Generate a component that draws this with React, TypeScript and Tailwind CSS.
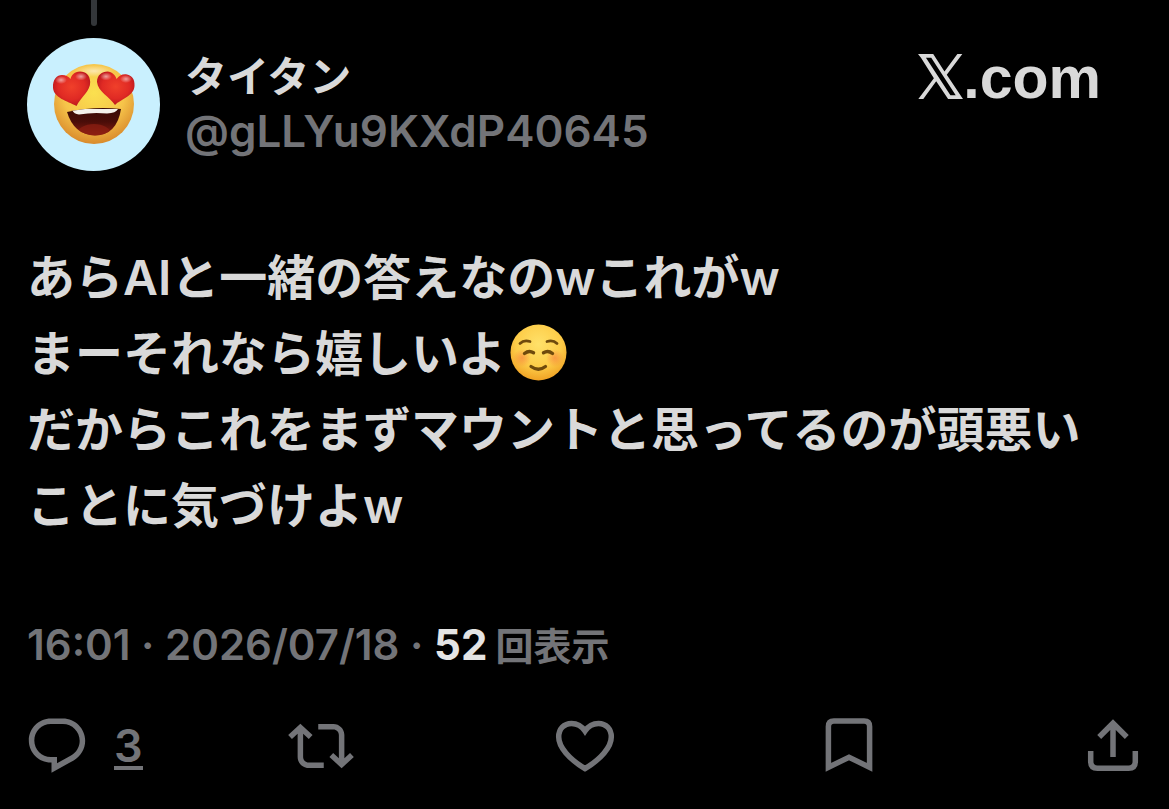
import type { ReactNode } from 'react';

const fontStack =
  "font-['Inter','Noto_Sans_CJK_JP',sans-serif] font-semibold";

const lines = [
  'だからこれをまずマウントと思ってるのが頭悪い',
  'ことに気づけよw',
];

function HeartEyes() {
  return (
    <svg viewBox="0 0 133 133" className="size-full" role="img" aria-label="avatar">
      <defs>
        <radialGradient id="face" cx="0.5" cy="0.36" r="0.64">
          <stop offset="0" stopColor="#fbe04f" />
          <stop offset="0.6" stopColor="#f6c44a" />
          <stop offset="1" stopColor="#d98a2c" />
        </radialGradient>
        <radialGradient id="heart" cx="0.5" cy="0.45" r="0.6">
          <stop offset="0" stopColor="#f0402a" />
          <stop offset="0.6" stopColor="#e02a24" />
          <stop offset="1" stopColor="#b3141c" />
        </radialGradient>
        <radialGradient id="shine">
          <stop offset="0" stopColor="#fff" stopOpacity="0.55" />
          <stop offset="1" stopColor="#fff" stopOpacity="0" />
        </radialGradient>
        <linearGradient id="mouth" x1="0" y1="0" x2="0" y2="1">
          <stop offset="0" stopColor="#3a0a06" />
          <stop offset="0.5" stopColor="#4a0d08" />
          <stop offset="1" stopColor="#8a1c10" />
        </linearGradient>
        <clipPath id="mouthClip">
          <path d="M40 74Q67 68 94 71Q90 97 68 97.500Q47 97 40 74Z" />
        </clipPath>
      </defs>
      <circle cx="66.500" cy="66.500" r="66.500" fill="#c9f0fe" />
      <circle cx="67" cy="66" r="40" fill="url(#face)" />
      <ellipse cx="67" cy="33" rx="20" ry="6" fill="url(#shine)" />
      <path d="M40 74Q67 68 94 71Q90 97 68 97.500Q47 97 40 74Z" fill="url(#mouth)" />
      <g clipPath="url(#mouthClip)">
        <ellipse cx="67" cy="96" rx="17" ry="10" fill="#8f1f12" opacity="0.7" />
        <path d="M45 71H91Q89 75 80 75.500Q66 74 52 76.500Q47 76 45 72Z" fill="#f4f1ec" />
      </g>
      <path
        d="M49.500 68C40 63 27 60 26 50C25.500 41 30 37 35 37C39 37 42 39 43.500 41C44.500 37 47 34 53 33.500C59 33.500 63 37.500 63.200 44C63.500 53 54 59 49.500 68Z"
        fill="url(#heart)"
      />
      <path
        d="M88 67C83 59 71 54 70 44C70 37 75 33.500 80.500 33.500C85 34 88.500 37 89.500 41C92 37.500 95 36 99 36.300C104.500 37 108 41 107.500 48C107 58 94 61 88 67Z"
        fill="url(#heart)"
      />
      <ellipse cx="34" cy="42" rx="6" ry="4" fill="url(#shine)" />
      <ellipse cx="54" cy="38.500" rx="6" ry="4" fill="url(#shine)" />
      <ellipse cx="79" cy="38.500" rx="6" ry="4" fill="url(#shine)" />
      <ellipse cx="99" cy="41" rx="6" ry="4" fill="url(#shine)" />
    </svg>
  );
}

function Smile() {
  return (
    <svg
      viewBox="0 0 57 57"
      className="mb-1 ml-1 size-[57px]"
      role="img"
      aria-label="☺️">
      <defs>
        <radialGradient id="smileFace" cx="0.5" cy="0.35" r="0.68">
          <stop offset="0" stopColor="#ffe16a" />
          <stop offset="0.6" stopColor="#fdcc48" />
          <stop offset="1" stopColor="#ee9d20" />
        </radialGradient>
        <radialGradient id="blush">
          <stop offset="0" stopColor="#f4683c" stopOpacity="0.5" />
          <stop offset="1" stopColor="#f4683c" stopOpacity="0" />
        </radialGradient>
      </defs>
      <circle cx="28.500" cy="28.500" r="28" fill="url(#smileFace)" />
      <circle cx="12" cy="34" r="9" fill="url(#blush)" />
      <circle cx="45" cy="34" r="9" fill="url(#blush)" />
      <g fill="none" stroke="#6f4a0c" strokeLinecap="round">
        <path d="M10 19.500Q14 15.500 20 17.500" strokeWidth="2.800" />
        <path d="M37 17.500Q43 15.500 47 19.500" strokeWidth="2.800" />
        <path d="M14.500 29.500Q19 26 23.500 28.800" strokeWidth="3.400" />
        <path d="M33.500 28.800Q38 26 42.500 29.500" strokeWidth="3.400" />
        <path d="M21 42.500Q28.500 48 35.500 42.500" strokeWidth="3.200" />
      </g>
    </svg>
  );
}

function Logo() {
  return (
    <div className="flex items-center font-['Liberation_Sans',Arial,sans-serif] text-[59px] leading-[64px] font-bold text-[#d9d9d9]">
      <svg viewBox="0 0 136 136" className="mb-1 size-[45px]" fill="currentColor" aria-label="X">
        <path
          fillRule="evenodd"
          d="M0 0H46L80 53L119 0H134L87 63L136 136H91L55 82L16 136H1L48 73L9 11ZM24 11L98 125H114L40 11Z"
        />
      </svg>
      .com
    </div>
  );
}

function Action({ label, text, children }: { label: string; text?: string; children: ReactNode }) {
  return (
    <button aria-label={label} className="flex flex-1 items-center last:flex-none">
      {children}
      {text && (
        <span className="mt-1 ml-6 border-b-4 border-[#737478] text-[45px] leading-[40px]">
          {text}
        </span>
      )}
    </button>
  );
}

export default function App() {
  return (
    <div className={`min-h-screen bg-black text-[#d9d9d9] ${fontStack}`}>
      <article className="pr-[23px] pl-6">
        <header className="flex items-start px-[3px]">
          <div className="flex w-[133px] flex-none flex-col items-center gap-3">
            <div className="h-[26px] w-[6px] rounded-b-full bg-[#333639]" />
            <div className="size-[133px]">
              <HeartEyes />
            </div>
          </div>
          <div className="mt-[50px] ml-[25px] flex-1">
            <h1 className="text-[42px] leading-[54px] font-bold">タイタン</h1>
            <p className="text-[44px] leading-[54px] text-[#737478]">@gLLYu9KXdP40645</p>
          </div>
          <div className="mt-[46px] mr-[42px]">
            <Logo />
          </div>
        </header>

        <div className="mt-[69px] px-[3px] text-[48px] leading-[76px]">
          <p>あらAIと一緒の答えなのwこれがw</p>
          <p className="flex items-center">
            まーそれなら嬉しいよ
            <Smile />
          </p>
          {lines.map((line) => (
            <p key={line}>{line}</p>
          ))}
        </div>

        <p className="mt-[71px] px-[3px] text-[42px] leading-[60px] text-[#737478]">
          16:01 · 2026/07/18 · <span className="font-bold text-[#e4e4e4]">52</span>
          <span className="ml-2 text-[38px]">回表示</span>
        </p>

        {/* reply, repost, like, bookmark, share */}
        <div className="mt-[37px] flex text-[#737478]">
          <Action label="返信" text="3">
            <svg viewBox="0 0 24 24" className="size-[66px]" fill="currentColor">
              <path d="M1.751 10c0-4.42 3.584-8 8.005-8h4.366c4.49 0 8.129 3.64 8.129 8.13 0 2.960-1.607 5.680-4.196 7.110l-8.054 4.460v-3.690h-.067c-4.490.1-8.183-3.510-8.183-8.010zm8.005-6c-3.317 0-6.005 2.690-6.005 6 0 3.370 2.770 6.080 6.138 6.010l.351-.010h1.761v2.300l5.087-2.810c1.951-1.080 3.163-3.130 3.163-5.360 0-3.390-2.744-6.130-6.129-6.130H9.756z" />
            </svg>
          </Action>
          <Action label="リポスト">
            <svg viewBox="0 0 24 24" className="size-[66px]" fill="currentColor">
              <path d="M4.500 3.880l4.432 4.140-1.364 1.460L5.500 7.550V16c0 1.100.896 2 2 2H13v2H7.500c-2.209 0-4-1.790-4-4V7.550L1.432 9.480.068 8.020 4.500 3.880zM16.500 6H11V4h5.500c2.209 0 4 1.790 4 4v8.450l2.068-1.930 1.364 1.460-4.432 4.140-4.432-4.140 1.364-1.460 2.068 1.930V8c0-1.100-.896-2-2-2z" />
            </svg>
          </Action>
          <Action label="いいね">
            <svg viewBox="0 0 66 66" className="size-[66px]" fill="none" stroke="currentColor" strokeWidth="5.500">
              <path d="M33 55.600C17 46 6.700 34 6.700 24C6.700 16 12 10.400 19.500 10.400C25.500 10.400 30 13.500 33 18C36 13.500 40.500 10.400 46.500 10.400C54 10.400 59.300 16 59.300 24C59.300 34 49 46 33 55.600Z" />
            </svg>
          </Action>
          <Action label="ブックマーク">
            <svg viewBox="0 0 66 66" className="size-[66px]" fill="none" stroke="currentColor" strokeWidth="5.500">
              <path d="M12.400 54.300V13.500Q12.400 8 17.900 8H48.100Q53.600 8 53.600 13.500V54.300L33 44.200Z" />
            </svg>
          </Action>
          <Action label="共有">
            <svg viewBox="0 0 66 66" className="size-[66px]" fill="none" stroke="currentColor" strokeWidth="5.500">
              <path d="M19.200 24L33 10.200L46.800 24M33 10.200V44M10.700 38V48.500Q10.700 55.200 17.400 55.200H48.600Q55.300 55.200 55.300 48.500V38" />
            </svg>
          </Action>
        </div>
      </article>
    </div>
  );
}
